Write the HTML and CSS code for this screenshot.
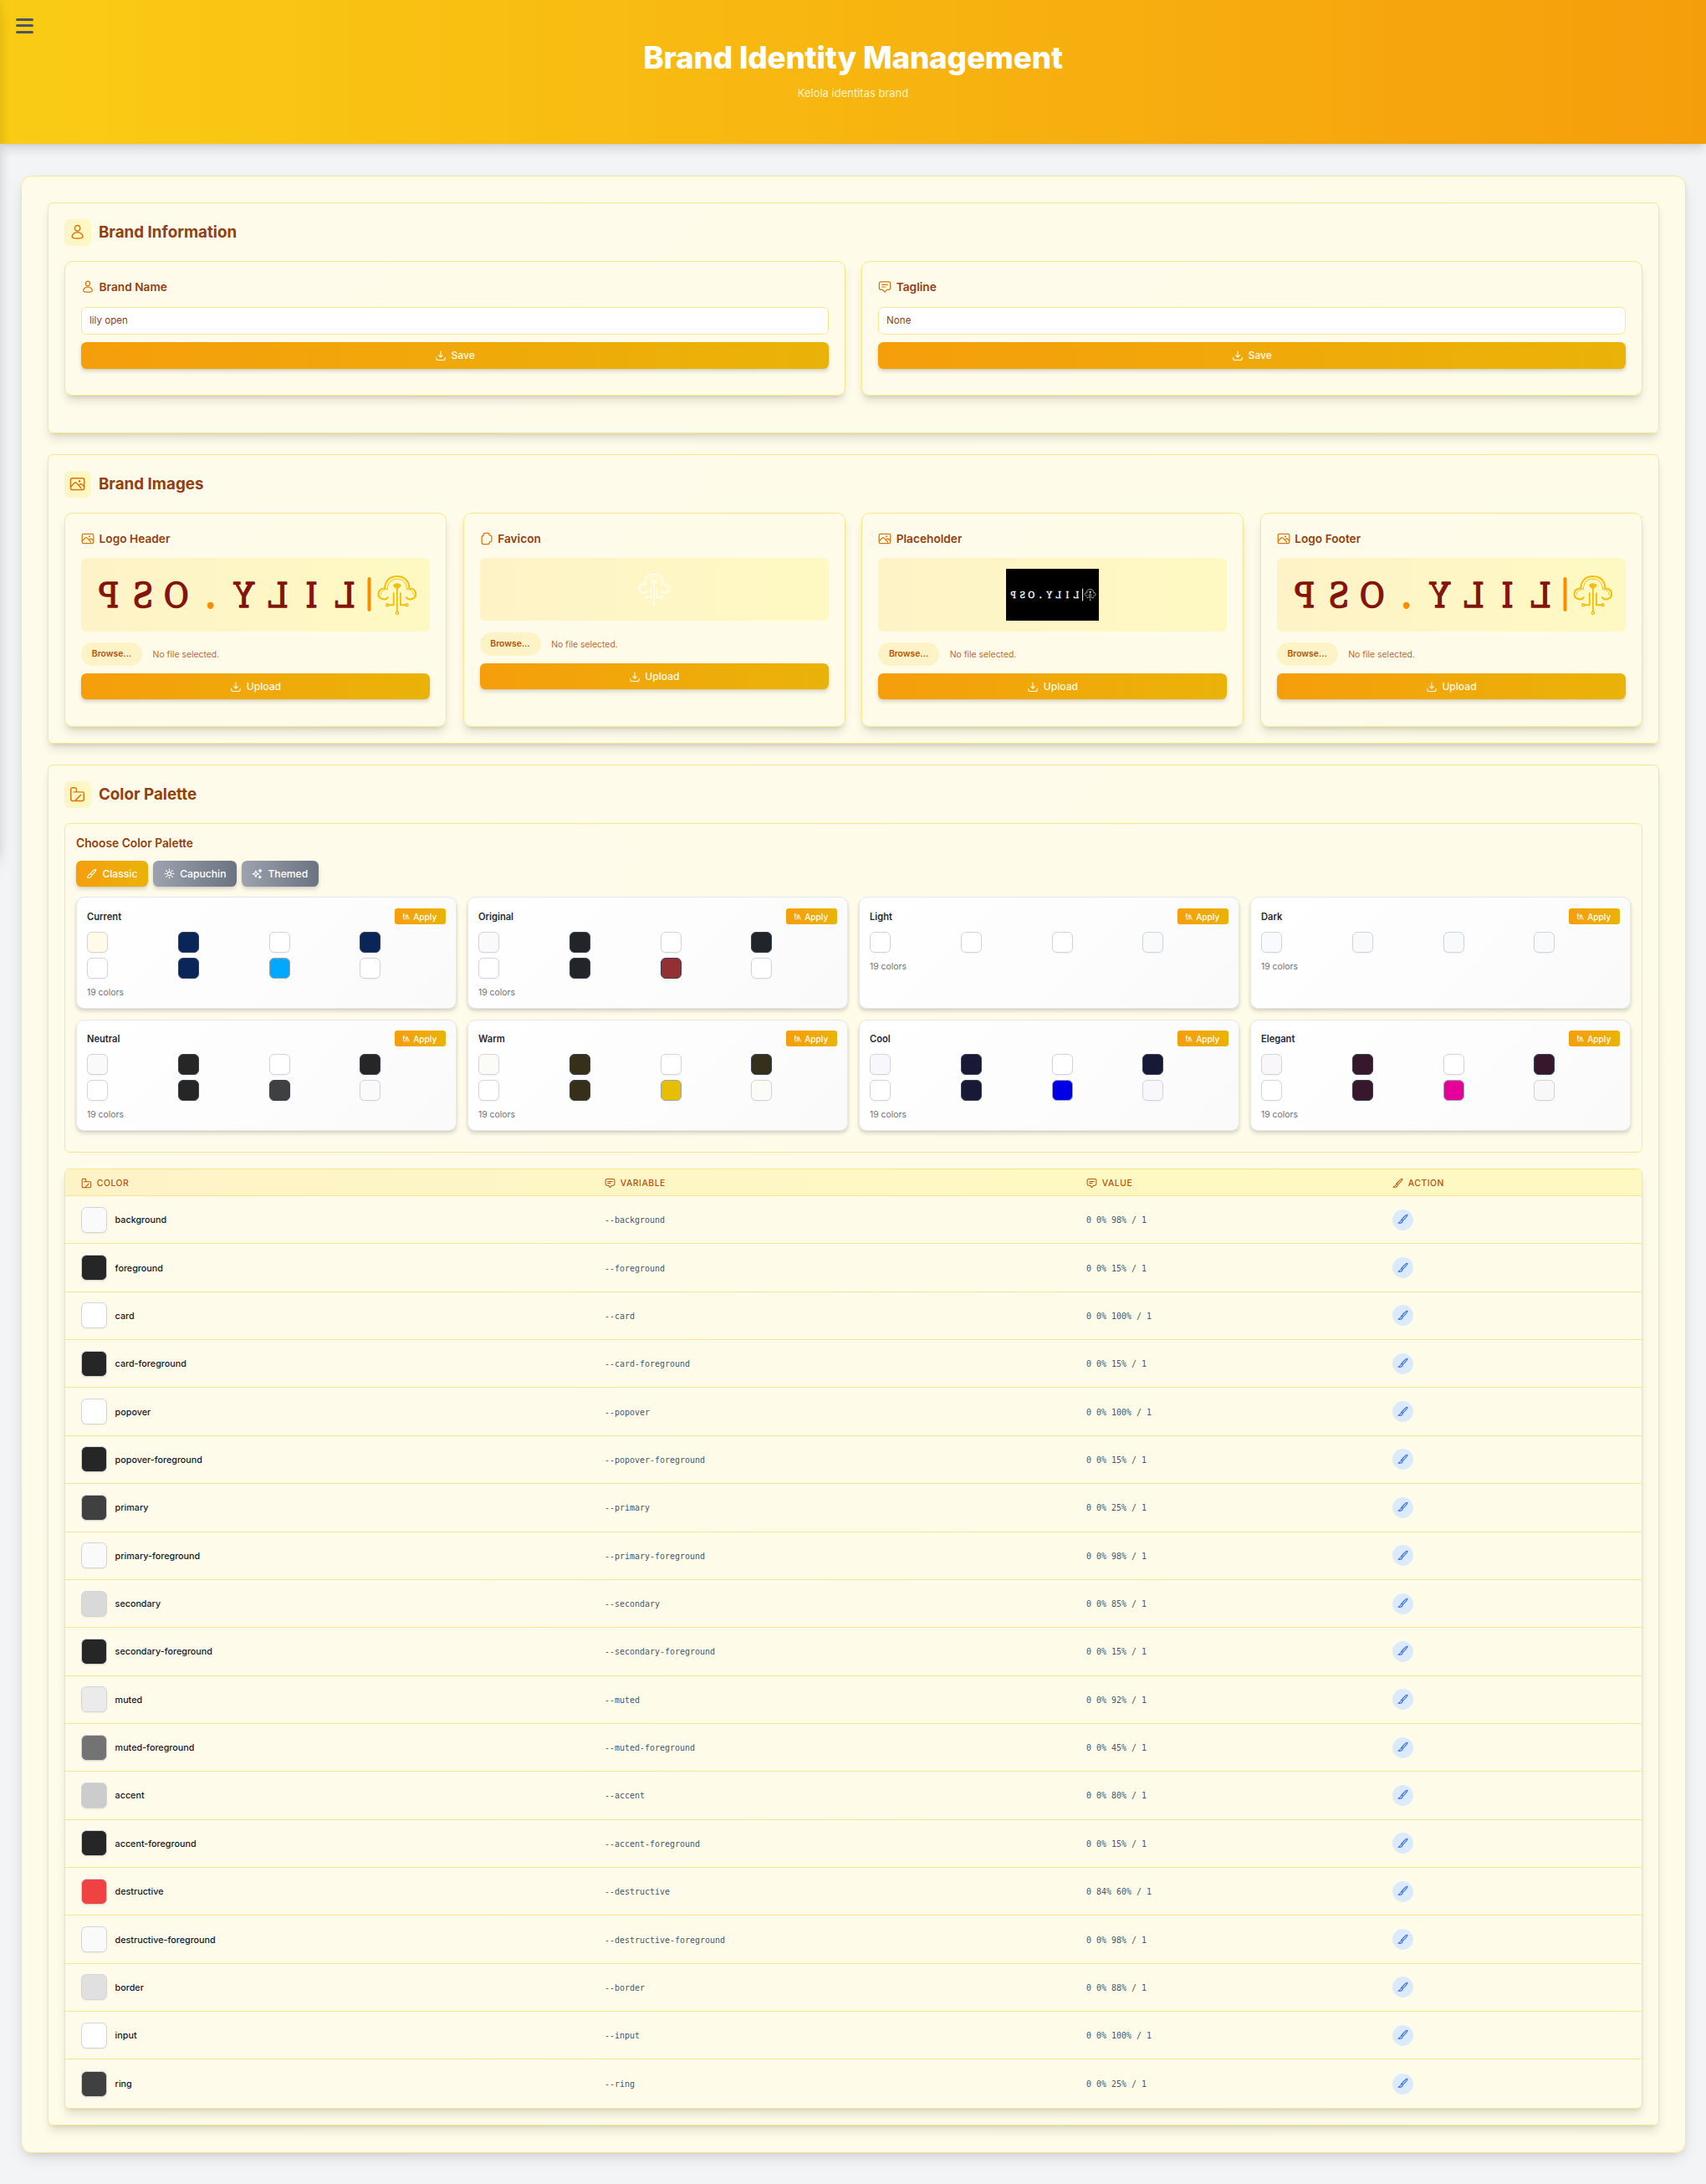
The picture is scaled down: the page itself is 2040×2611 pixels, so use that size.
FILE: index.html
```html
<!DOCTYPE html>
<html lang="id">
<head>
<meta charset="utf-8">
<title>Brand Identity Management</title>
<link rel="stylesheet" href="styles.css">
</head>
<body>
<svg class="defs" aria-hidden="true">
  <symbol id="i-user" viewBox="0 0 24 24"><ellipse cx="12" cy="6" rx="3.9" ry="4.2"/><path d="M12 12.2C7 12.2 4 15.6 4 18.8 4 20.9 6 21.3 12 21.3S20 20.9 20 18.8C20 15.6 17 12.2 12 12.2Z"/></symbol>
  <symbol id="i-message" viewBox="0 0 24 24"><path d="M5 2.8H19A3 3 0 0 1 22 5.8V14A3 3 0 0 1 19 17H16L12 21.3 8 17H5A3 3 0 0 1 2 14V5.8A3 3 0 0 1 5 2.8ZM7 8.2H17M7 12H13"/></symbol>
  <symbol id="i-image" viewBox="0 0 24 24"><rect x="1.8" y="3.5" width="20.4" height="17" rx="2.5"/><path d="M2 16.2 7 11C8.6 9.4 9.6 9.4 11 11L17.5 18M14.2 14.3 16 12.6C17 11.7 18 11.8 19 12.8L22 16"/><circle cx="15" cy="8" r=".7"/></symbol>
  <symbol id="i-pages" viewBox="0 0 24 24"><path d="M9 2.2H14.6C15.6 2.2 16 2.6 16.2 3.4L16.6 5.4 20.8 7.2V15.6C20.8 17.2 20 17.8 18.5 17.8H16.8V18.8C16.8 21 16 21.8 14 21.8H6.3C4.1 21.8 3.2 20.8 3.2 18.8V9C3.2 7.2 4.1 6.4 6.2 6.4V5.2C6.2 3.3 7.2 2.2 9 2.2Z"/></symbol>
  <symbol id="i-swatch" viewBox="0 0 24 24"><path d="M6.5 8.6H19.5C21 8.6 21.6 9.3 21.6 10.6V19C21.6 21 20.8 21.8 19 21.8H5C3 21.8 2.2 21 2.2 19V4.4C2.2 3 2.9 2.2 4.3 2.2H8.5C9.9 2.2 10.6 3 10.6 4.4V8.6M8.6 21.4 17 13"/></symbol>
  <symbol id="i-save" viewBox="0 0 24 24"><path d="M12 3.5V15.5M7.8 11.5 12 15.7 16.2 11.5M3 16V17.8C3 20.4 4 21.4 7 21.4H17C20 21.4 21 20.4 21 17.8V16"/></symbol>
  <symbol id="i-brush" viewBox="0 0 24 24"><path d="M21.5 2.6C19 1.6 12 8 9.4 12.4L12.2 15.2C16.5 12 22.6 5 21.5 2.6ZM9.4 12.4C5.5 12.4 4.5 15.5 2.8 20.8 8 22.2 12.2 19.5 12.2 15.2"/></symbol>
  <symbol id="i-sun" viewBox="0 0 24 24"><circle cx="12" cy="12" r="4"/><path d="M12 1.8V5M12 19V22.2M1.8 12H5M19 12H22.2M4.8 4.8 7 7M17 17 19.2 19.2M4.8 19.2 7 17M17 7 19.2 4.8"/></symbol>
  <symbol id="i-sparkles" viewBox="0 0 24 24"><path d="M9 5.5 10.8 10.7 16 12.5 10.8 14.3 9 19.5 7.2 14.3 2 12.5 7.2 10.7ZM18.5 2 19.3 4.7 22 5.5 19.3 6.3 18.5 9 17.7 6.3 15 5.5 17.7 4.7ZM18 16.5 18.7 18.8 21 19.5 18.7 20.2 18 22.5 17.3 20.2 15 19.5 17.3 18.8Z"/></symbol>
  <symbol id="i-apply" viewBox="0 0 24 24"><path d="M3 4.5H8M3.5 4.5V10H8.5M3.5 10V17C3.5 21 10.5 21 10.5 17V8M14.5 6.5V20M15 7 21 20.5"/></symbol>
  <symbol id="i-pencil" viewBox="0 0 24 24"><path d="M22 2.4C20 1 16.5 4.5 9.4 12.8L11.8 15.4C18.5 9.2 23.4 4.4 22 2.4ZM9.4 12.8C8.4 16.8 5.4 18.8 2 20.6 6.4 21.6 11 20.6 11.8 15.4"/></symbol>
  <symbol id="i-tree" viewBox="0 0 47.4 48">
    <g fill="none" stroke="currentColor" stroke-linecap="round">
      <path stroke-width="2.1" d="M12.5 27C10.5 30.8 1.3 29.5 1.3 22.8 1.3 19 4.2 15.8 9 16.2 9.4 7 15 1.6 23.7 1.6S38 7 38.4 16.2C43.2 15.8 46.1 19 46.1 22.8 46.1 29.5 36.9 30.8 34.9 27"/>
      <path stroke-width="1" d="M12 17C12.5 9 17 4.8 23.7 4.8S34.9 9 35.4 17M12 17C7 17.5 4 20 4.3 23.5M35.4 17C40.4 17.5 43.4 20 43.1 23.5"/>
      <path stroke-width="1.9" d="M23.7 13V44M19.6 22V36H13.5M27.8 22V36H33.9"/>
      <circle cx="12" cy="36" r="1.5" stroke-width="1.4"/><circle cx="35.4" cy="36" r="1.5" stroke-width="1.4"/><circle cx="23.7" cy="45.6" r="1.6" stroke-width="1.4"/>
    </g>
    <path fill="currentColor" d="M19 12.5C19.5 9 28 9 28.4 12.5 28.4 14.5 25 15.5 23.7 18 22.4 15.5 19 14.5 19 12.5Z"/>
  </symbol>
</svg>
<div class="sidebar-edge"></div>
<header class="hero">
  <button class="menu" aria-label="Menu"><span></span><span></span><span></span></button>
  <h1>Brand Identity Management</h1>
  <p>Kelola identitas brand</p>
</header>
<main class="shell">
  <section class="panel panel-info">
    <div class="panel-title"><span class="badge"><svg><use href="#i-user"/></svg></span><h2>Brand Information</h2></div>
    <div class="cards two">
      <div class="card">
        <h3><svg><use href="#i-user"/></svg>Brand Name</h3>
        <input class="field" value="lily open">
        <button class="btn"><svg><use href="#i-save"/></svg>Save</button>
      </div>
      <div class="card">
        <h3><svg><use href="#i-message"/></svg>Tagline</h3>
        <input class="field" value="None">
        <button class="btn"><svg><use href="#i-save"/></svg>Save</button>
      </div>
    </div>
  </section>
  <section class="panel">
    <div class="panel-title"><span class="badge"><svg><use href="#i-image"/></svg></span><h2>Brand Images</h2></div>
    <div class="cards four">
      <div class="card">
        <h3><svg><use href="#i-image"/></svg>Logo Header</h3>
        <div class="preview">
          <svg class="logo" viewBox="0 0 418 88">
            <text class="logo-text" transform="translate(418 58.8) scale(-.88 1)" text-anchor="middle" x="115.9 161.4 206.8 253.4 298.9 345.5 390.9 437.5">LILY<tspan class="logo-dot">.</tspan>OSP</text>
            <path class="logo-bar" d="M345 25V62"/>
            <use class="logo-tree" href="#i-tree" x="354.7" y="20.3" width="47.4" height="48"/>
          </svg>
        </div>
        <div class="file"><span class="browse">Browse…</span><span>No file selected.</span></div>
        <button class="btn"><svg><use href="#i-save"/></svg>Upload</button>
      </div>
      <div class="card">
        <h3><svg><use href="#i-pages"/></svg>Favicon</h3>
        <div class="preview small"><svg class="favicon"><use href="#i-tree"/></svg></div>
        <div class="file"><span class="browse">Browse…</span><span>No file selected.</span></div>
        <button class="btn"><svg><use href="#i-save"/></svg>Upload</button>
      </div>
      <div class="card">
        <h3><svg><use href="#i-image"/></svg>Placeholder</h3>
        <div class="preview">
          <div class="thumb">
            <svg class="logo mono-logo" viewBox="0 0 418 88">
              <text class="logo-text" transform="translate(418 58.8) scale(-.88 1)" text-anchor="middle" x="115.9 161.4 206.8 253.4 298.9 345.5 390.9 437.5">LILY<tspan class="logo-dot">.</tspan>OSP</text>
              <path class="logo-bar" d="M345 18V70"/>
              <use class="logo-tree" href="#i-tree" x="352" y="13" width="54" height="62"/>
            </svg>
          </div>
        </div>
        <div class="file"><span class="browse">Browse…</span><span>No file selected.</span></div>
        <button class="btn"><svg><use href="#i-save"/></svg>Upload</button>
      </div>
      <div class="card">
        <h3><svg><use href="#i-image"/></svg>Logo Footer</h3>
        <div class="preview">
          <svg class="logo" viewBox="0 0 418 88">
            <text class="logo-text" transform="translate(418 58.8) scale(-.88 1)" text-anchor="middle" x="115.9 161.4 206.8 253.4 298.9 345.5 390.9 437.5">LILY<tspan class="logo-dot">.</tspan>OSP</text>
            <path class="logo-bar" d="M345 25V62"/>
            <use class="logo-tree" href="#i-tree" x="354.7" y="20.3" width="47.4" height="48"/>
          </svg>
        </div>
        <div class="file"><span class="browse">Browse…</span><span>No file selected.</span></div>
        <button class="btn"><svg><use href="#i-save"/></svg>Upload</button>
      </div>
    </div>
  </section>
  <section class="panel">
    <div class="panel-title"><span class="badge"><svg><use href="#i-swatch"/></svg></span><h2>Color Palette</h2></div>
    <div class="chooser">
      <h3>Choose Color Palette</h3>
      <div class="tabs">
        <button class="tab active"><svg><use href="#i-brush"/></svg>Classic</button>
        <button class="tab wide"><svg><use href="#i-sun"/></svg>Capuchin</button>
        <button class="tab"><svg><use href="#i-sparkles"/></svg>Themed</button>
      </div>
      <div class="palettes" id="palettes"></div>
    </div>
    <div class="table">
      <div class="thead">
        <div><svg><use href="#i-swatch"/></svg>COLOR</div>
        <div><svg><use href="#i-message"/></svg>VARIABLE</div>
        <div><svg><use href="#i-message"/></svg>VALUE</div>
        <div><svg><use href="#i-pencil"/></svg>ACTION</div>
      </div>
      <div id="rows"></div>
    </div>
  </section>
</main>
<script src="script.js"></script>
</body>
</html>
```
FILE: styles.css
```css
* { box-sizing: border-box; margin: 0; padding: 0; }
body { background: #f3f4f6; font-family: Inter, "Liberation Sans", sans-serif; padding-bottom: 37px; overflow-x: hidden; }
button, input { font: inherit; border: 0; }
svg { fill: none; stroke: currentColor; stroke-width: 1.85; stroke-linecap: round; stroke-linejoin: round; display: block; flex: none; }
.defs { position: absolute; width: 0; height: 0; }
.sidebar-edge { position: absolute; left: -40px; top: 0; width: 40px; height: 1024px; box-shadow: 0 16px 20px -4px rgba(0,0,0,.1), 0 0 14px rgba(0,0,0,.1); z-index: 2; }

.hero { height: 172px; padding-top: 45.6px; text-align: center; position: relative; background: linear-gradient(90deg, #facc15, #f59e0b); box-shadow: 0 8px 12px -2.4px rgba(0,0,0,.12), 0 3.2px 4.8px -2.4px rgba(0,0,0,.1); }
.hero h1 { color: #fff; font-size: 36.8px; line-height: 46px; font-weight: 800; letter-spacing: -.18px; }
.hero p { color: #fef3c7; font-size: 13px; line-height: 20px; margin-top: 9px; }
.menu { position: absolute; left: 19px; top: 22px; width: 21px; background: none; display: grid; gap: 4.3px; }
.menu span { height: 3px; border-radius: 1.5px; background: #4b5563; }

.shell { margin: 38px 24px 0 25px; padding: 31px 31px 32px 31px; display: grid; gap: 25px; border: 1px solid #fde68a; border-radius: 12.8px; background: linear-gradient(135deg, #fffbeb, #fefce8); box-shadow: 0 8px 20px -4px rgba(0,0,0,.12), 0 4px 8px -3px rgba(0,0,0,.1); }
.panel { min-width: 0; border: 1px solid #fde68a; border-radius: 6.4px; padding: 19px; background: linear-gradient(135deg, #fffbeb, #fefce8); box-shadow: 0 8px 12px -2.4px rgba(0,0,0,.12), 0 3.2px 4.8px -3.2px rgba(0,0,0,.12); }
.panel-info { padding-bottom: 44px; }
.panel-title { display: flex; align-items: center; gap: 8.9px; height: 32px; margin-bottom: 18px; color: #92400e; }
.panel-title h2 { font-size: 18.8px; line-height: 26px; font-weight: 700; }
.badge { width: 32px; height: 32px; border-radius: 6.4px; display: grid; place-items: center; color: #d97706; background: linear-gradient(90deg, #fef3c7, #fef9c3); }
.badge svg { width: 19.2px; height: 19.2px; }

.cards { display: grid; gap: 19.2px; }
.two { grid-template-columns: repeat(2, 1fr); }
.four { grid-template-columns: repeat(4, 1fr); }
.card { border: 1px solid #fde68a; border-radius: 9.6px; padding: 19px 19px 32px; background: linear-gradient(135deg, #fffbeb, #fefce8); box-shadow: 0 8px 12px -2.4px rgba(0,0,0,.12), 0 3.2px 4.8px -3.2px rgba(0,0,0,.12); }
.two .card { padding-bottom: 31px; }
.card h3 { display: flex; align-items: center; gap: 5.6px; font-size: 13.7px; line-height: 22px; font-weight: 600; color: #92400e; margin-bottom: 12px; }
.two .card h3 { margin-bottom: 13px; }
.card h3 svg { width: 16px; height: 16px; color: #d97706; }
.field { display: block; width: 100%; height: 33px; border: 1px solid #fde68a; border-radius: 6.4px; padding: 0 9px 1.6px; background: #fff; color: #8a4b2c; color: #85431f; font-size: 11.6px; margin-bottom: 9px; }
.btn { display: flex; width: 100%; height: 31px; align-items: center; justify-content: center; gap: 5.4px; color: #fffbeb; font-size: 12.1px; font-weight: 500; border-radius: 6.4px; background: linear-gradient(90deg, #f59e0b, #eab308); box-shadow: 0 3.2px 4.8px -.8px rgba(0,0,0,.14), 0 1.6px 3.2px -1.6px rgba(0,0,0,.1); }
.two .btn { height: 32px; padding-bottom: 1px; }
.btn svg { width: 14px; height: 14px; }
.preview { height: 88px; border-radius: 6.4px; display: grid; place-items: center; background: linear-gradient(90deg, #fef3c7, #fef9c3); margin-bottom: 13px; }
.preview.small { height: 75px; margin-bottom: 14px; }
.logo { width: 100%; height: 88px; stroke: none; }
.logo-text { font-family: "DejaVu Serif", serif; font-size: 41.5px; fill: #86130b; stroke: #86130b; stroke-width: 1.5; }
.logo-dot { fill: #fb8c00; stroke: #fb8c00; stroke-width: 3; }
.logo-bar { stroke: #fb8c00; stroke-width: 4; }
.logo-tree { color: #f5bd0c; }
.favicon { width: 38px; height: 39px; color: #fffdf2; stroke: none; }
.thumb { width: 111px; height: 62px; background: #000; display: grid; place-items: center; }
.mono-logo { width: 111px; height: 24px; }
.mono-logo .logo-text, .mono-logo .logo-dot { fill: #fff; stroke: #fff; }
.mono-logo .logo-bar { stroke: #fff; }
.mono-logo .logo-tree { color: #d4d4d4; }
.file { display: flex; align-items: center; gap: 12.6px; height: 28px; margin-bottom: 9px; color: #bd6a34; font-size: 10.4px; }
.browse { width: 73px; height: 28px; line-height: 28px; border-radius: 14px; text-align: center; background: #fef3c7; color: #b45309; font-weight: 600; }

.chooser { height: 394px; border: 1px solid #fde68a; border-radius: 6.4px; padding: 13px; margin-bottom: 19px; background: linear-gradient(90deg, #fffbeb, #fefce8); }
.chooser h3 { font-size: 13.8px; line-height: 20px; font-weight: 600; color: #92400e; }
.tabs { display: flex; gap: 6.2px; margin: 11px 0 12px; }
.tab { display: flex; align-items: center; gap: 6.4px; height: 31px; padding: 0 12.4px 1px 12px; border-radius: 6.4px; color: #fff; font-size: 12.15px; font-weight: 500; background: linear-gradient(90deg, #9ca3af, #6b7280); box-shadow: 0 3.2px 4.8px -.8px rgba(0,0,0,.14), 0 1.6px 3.2px -1.6px rgba(0,0,0,.1); }
.tab.active { background: linear-gradient(90deg, #f59e0b, #eab308); }
.tab.wide { padding-left: 12.8px; }
.tab svg { width: 13px; height: 13px; stroke-width: 2; }
.palettes { display: grid; grid-template-columns: repeat(4, 1fr); grid-template-rows: 134px 133px; gap: 13px; }
.palette { border: 1px solid #e5e7eb; border-radius: 9.6px; padding: 13px 12px; background: linear-gradient(135deg, #fff, #fafafa); box-shadow: 0 3.2px 4.8px -.8px rgba(0,0,0,.14), 0 1.6px 3.2px -1.6px rgba(0,0,0,.1); }
.palette-head { display: flex; justify-content: space-between; align-items: center; height: 19px; margin-bottom: 9px; font-size: 11.15px; font-weight: 600; color: #1f2937; }
.palette:nth-child(n+5) .palette-head { margin-top: -1px; }
.apply { display: flex; align-items: center; gap: 3.6px; width: 61px; height: 19px; padding-left: 9px; border-radius: 3.2px; color: #fffbeb; font-size: 10.1px; font-weight: 500; background: linear-gradient(90deg, #f59e0b, #eab308); }
.apply svg { width: 9.6px; height: 9.6px; stroke-width: 2.2; margin-top: 1px; }
.swatches { display: grid; grid-template-columns: repeat(4, 1fr); gap: 6.2px; }
.swatch { width: 25px; height: 25px; border: 1px solid #d1d5db; border-radius: 6px; box-shadow: 0 1px 2px rgba(0,0,0,.05); }
.swatch.dark { border-color: #374151; }
.swatch.mid { border-color: #9ca3af; }
.count { font-size: 10.4px; line-height: 16px; color: #6b7280; margin-top: 8.5px; }

.table { border: 1px solid #fde68a; border-radius: 6.4px; overflow: hidden; background: #fffbeb; box-shadow: 0 8px 12px -2.4px rgba(0,0,0,.12), 0 3.2px 4.8px -3.2px rgba(0,0,0,.12); }
.thead, .row { display: grid; grid-template-columns: 626px 576px 366px 1fr; align-items: center; border-bottom: 1px solid #fde68a; }
.thead { height: 32px; padding-top: 1px; background: linear-gradient(90deg, #fef3c7, #fef9c3 70%); color: #b45309; font-size: 10.4px; font-weight: 500; letter-spacing: .52px; }
.thead > div { display: flex; align-items: center; gap: 5.8px; padding-left: 19px; }
.thead svg { width: 13px; height: 13px; }
.row { height: 57.37px; background: linear-gradient(135deg, #fffbeb, #fefce8); }
.row:last-child { border-bottom: 0; }
.row > div { padding-left: 19px; }
.name { display: flex; align-items: center; gap: 9.6px; color: #111827; font-size: 10.75px; font-weight: 500; }
.label { padding-top: 1px; }
.chip { width: 31px; height: 31px; border: 1px solid #d1d5db; border-radius: 6.4px; box-shadow: 0 1px 2px rgba(0,0,0,.06); }
.code { font-family: "DejaVu Sans Mono", monospace; font-size: 9.97px; color: #4b5563; padding-top: 1px; }
.edit { width: 25px; height: 25px; border-radius: 50%; display: grid; place-items: center; background: #dbeafe; color: #2563eb; }
.edit svg { width: 13px; height: 13px; margin-top: -1px; }
```
FILE: script.js
```js
const palettes = [
  ['Current', ['#fffbe6', '#0a2558', '#fff', '#0a2558', '#fff', '#0a2558', '#00a8ff', '#fff']],
  ['Original', ['#fafafa', '#212529', '#fff', '#212529', '#fff', '#212529', '#943034', '#fff']],
  ['Light', ['#fff', '#fff', '#fff', '#f8fafc']],
  ['Dark', ['#f8fafc', '#f8fafc', '#f8fafc', '#f8fafc']],
  ['Neutral', ['#fafafa', '#262626', '#fff', '#262626', '#fff', '#262626', '#404040', '#fafafa']],
  ['Warm', ['#fcfcf7', '#36301a', '#fff', '#36301a', '#fff', '#36301a', '#e6bf00', '#fcfcf7']],
  ['Cool', ['#f7f7fc', '#171936', '#fff', '#171936', '#fff', '#171936', '#0000e6', '#f7f7fc']],
  ['Elegant', ['#faf7f9', '#36172b', '#fff', '#36172b', '#fff', '#36172b', '#e60099', '#faf7f9']]
];
const bright = ['#00a8ff', '#e6bf00', '#0000e6', '#e60099'];
const light = /^#f/;
const tone = c => light.test(c) ? '' : bright.includes(c) ? ' mid' : ' dark';

document.getElementById('palettes').innerHTML = palettes.map(([name, colors]) => `
  <div class="palette">
    <div class="palette-head"><span>${name}</span><button class="apply"><svg><use href="#i-apply"/></svg>Apply</button></div>
    <div class="swatches">${colors.map(c => `<span class="swatch${tone(c)}" style="background:${c}"></span>`).join('')}</div>
    <div class="count">19 colors</div>
  </div>`).join('');

const variables = [
  ['background', '0 0% 98%'], ['foreground', '0 0% 15%'],
  ['card', '0 0% 100%'], ['card-foreground', '0 0% 15%'],
  ['popover', '0 0% 100%'], ['popover-foreground', '0 0% 15%'],
  ['primary', '0 0% 25%'], ['primary-foreground', '0 0% 98%'],
  ['secondary', '0 0% 85%'], ['secondary-foreground', '0 0% 15%'],
  ['muted', '0 0% 92%'], ['muted-foreground', '0 0% 45%'],
  ['accent', '0 0% 80%'], ['accent-foreground', '0 0% 15%'],
  ['destructive', '0 84% 60%'], ['destructive-foreground', '0 0% 98%'],
  ['border', '0 0% 88%'], ['input', '0 0% 100%'], ['ring', '0 0% 25%']
];

document.getElementById('rows').innerHTML = variables.map(([name, value]) => `
  <div class="row">
    <div class="name"><span class="chip" style="background:hsl(${value})"></span><span class="label">${name}</span></div>
    <div class="code">--${name}</div>
    <div class="code">${value} / 1</div>
    <div><div class="edit"><svg><use href="#i-pencil"/></svg></div></div>
  </div>`).join('');
```
